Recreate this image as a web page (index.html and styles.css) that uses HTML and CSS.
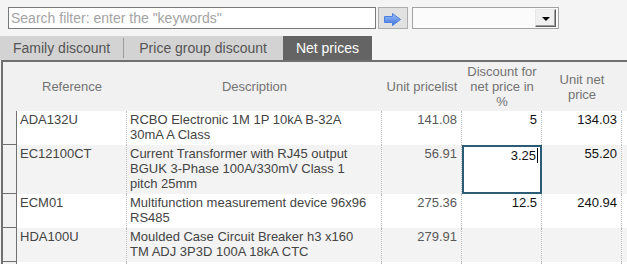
FILE: index.html
```html
<!DOCTYPE html>
<html>
	<head>
		<meta charset="UTF-8">
		<title>Net prices</title>
		<link rel="stylesheet" href="styles.css">
	</head>
	<body>
		<div class="toolbar">
			<input class="search" type="text" placeholder='Search filter: enter the "keywords"'>
			<button class="go">
				<svg width="17" height="13" viewBox="0 0 17 13">
					<defs>
						<linearGradient id="blue" x1="0" y1="0" x2="0" y2="1">
							<stop offset="0" stop-color="#a3c4f8"/>
							<stop offset="1" stop-color="#3a6fdc"/>
						</linearGradient>
					</defs>
					<polygon points="0.5,3.5 8.5,3.5 8.5,0.5 16.5,6.5 8.5,12.5 8.5,9.5 0.5,9.5" fill="url(#blue)" stroke="#4b7fe2" stroke-width="1"/>
				</svg>
			</button>
			<div class="combo"><span class="combo-btn"><i></i></span></div>
		</div>
		<div class="tabs">
			<span class="tab">Family discount</span>
			<span class="sep"></span>
			<span class="tab tab-wide">Price group discount</span>
			<span class="tab active">Net prices</span>
		</div>
		<div class="panel">
			<div class="row head">
				<div></div>
				<div>Reference</div>
				<div>Description</div>
				<div>Unit pricelist</div>
				<div>Discount for net price in %</div>
				<div>Unit net price</div>
			</div>
			<div class="row">
				<div class="rh"></div>
				<div>ADA132U</div>
				<div class="desc">RCBO Electronic 1M 1P 10kA B-32A 30mA A Class</div>
				<div class="num list">141.08</div>
				<div class="num">5</div>
				<div class="num">134.03</div>
			</div>
			<div class="row">
				<div class="rh"></div>
				<div>EC12100CT</div>
				<div class="desc">Current Transformer with RJ45 output BGUK 3-Phase 100A/330mV Class 1 pitch 25mm</div>
				<div class="num list">56.91</div>
				<div class="num edit">3.25<span class="caret"></span></div>
				<div class="num">55.20</div>
			</div>
			<div class="row">
				<div class="rh"></div>
				<div>ECM01</div>
				<div class="desc">Multifunction measurement device 96x96 RS485</div>
				<div class="num list">275.36</div>
				<div class="num">12.5</div>
				<div class="num">240.94</div>
			</div>
			<div class="row">
				<div class="rh"></div>
				<div>HDA100U</div>
				<div class="desc">Moulded Case Circuit Breaker h3 x160 TM ADJ 3P3D 100A 18kA CTC</div>
				<div class="num list">279.91</div>
				<div class="num"></div>
				<div class="num"></div>
			</div>
			<div class="row">
				<div class="rh"></div>
				<div></div>
				<div class="desc"></div>
				<div class="num"></div>
				<div class="num"></div>
				<div class="num"></div>
			</div>
		</div>
	</body>
</html>
```

FILE: styles.css
```css
*{
	padding: 0px;margin: 0px;
	box-sizing: border-box;
}
body{
	width: 627px;height: 264px;overflow: hidden;
	background: #f4f4f4;
	font-family: "Liberation Sans", Arial, sans-serif;
	font-size: 13px;
	color: #444;
}
.toolbar{
	display: flex;
	padding: 7px 0px 0px 8px;
	height: 29px;
}
.search{
	width: 368px;height: 22px;
	border: 1px solid #7a7a7a;
	background: #fff;
	padding: 0px 2px;
	font: 14px "Liberation Sans", Arial, sans-serif;
	outline: none;
}
.search::placeholder{
	color: #a3a3a3;
}
.go{
	width: 30px;height: 22px;margin-left: 2px;
	border: 1px solid #adadad;
	background: #e1e1e1;
	display: flex;align-items: center;justify-content: center;
}
.go svg{
	margin: 2px 2px 0px 0px;
}
.combo{
	width: 147px;height: 22px;margin-left: 4px;
	border: 1px solid #a3a3a3;
	background: #fbfbfb;
	display: flex;align-items: center;justify-content: flex-end;
	padding-right: 2px;
}
.combo-btn{
	width: 21px;height: 18px;
	background: #f0f0f0;
	border: 1px solid;
	border-color: #e8e8e8 #5e5e5e #5e5e5e #e8e8e8;
	box-shadow: inset -1px -1px 0px #a0a0a0;
	display: flex;align-items: center;justify-content: center;
}
.combo-btn i{
	width: 0px;height: 0px;
	border-top: 4px solid #000;
	border-left: 4px solid transparent;
	border-right: 4px solid transparent;
	margin-top: 1px;
}
.tabs{
	display: flex;
	margin-top: 7px;
	height: 24px;
}
.tab{
	display: flex;align-items: center;
	padding: 0px 13px;
	background: #d3d3d3;
	color: #555;
	font-size: 14px;
}
.tab-wide{
	padding: 0px 16px 0px 15px;
}
.sep{
	width: 1px;
	background: #d3d3d3;
	border-top: 2px solid #d3d3d3;
	border-bottom: 2px solid #d3d3d3;
	box-shadow: inset 0px 0px 0px 1px #9c9c9c;
}
.tab.active{
	background: #646464;
	color: #fff;
}
.panel{
	margin-left: 1px;
	border-top: 2px solid #707070;
	border-left: 2px solid #707070;
	background: #f9f9f9;
}
.row{
	display: grid;
	grid-template-columns: 14px 110px 255px 80px 80px 80px;
	line-height: 15px;
	background: #fff;
}
.row:nth-child(odd){
	background: #f3f3f3;
}
.row > div{
	padding: 1px 4px 3px 3px;
	border-right: 1px dotted #bdbdbd;
}
.row .rh{
	padding: 0px;
	background: #f2f2f2;
	border-right: 1px solid #707070;
	border-bottom: 1px solid #707070;
}
.row .desc{
	padding-right: 6px;
}
.row.head{
	background: #f1f1f1;
	height: 49px;
	color: #737373;
	text-align: center;
}
.row.head > div{
	border: none;
	padding: 0px 3px;
	display: flex;align-items: center;justify-content: center;
}
.num{
	text-align: right;
	color: #111;
}
.num.list{
	color: #595959;
}
.row .edit{
	background: #fff;
	border: 2px solid #2b5b75;
	padding: 1px 2px 0px 4px;
}
.caret{
	display: inline-block;
	width: 1px;height: 15px;
	background: #000;
	margin-left: 1px;
	vertical-align: top;
}
```
